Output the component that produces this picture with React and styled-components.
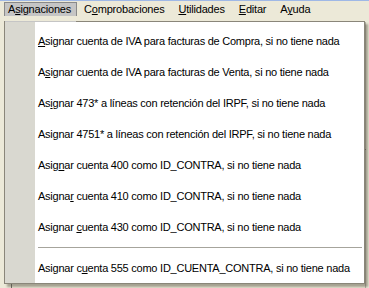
import React from "react";
import styled, { createGlobalStyle } from "styled-components";

const Global = createGlobalStyle`
  html, body { margin: 0; padding: 0; }
  body { font-family: "Liberation Sans", Arial, sans-serif; font-size: 11px; color: #000; }
`;

const Window = styled.div`
  position: relative;
  width: 369px;
  height: 288px;
  overflow: hidden;
  background: #ece9d8;
  display: flex;
  flex-direction: column;
`;

const TitleEdge = styled.div`
  height: 1px;
  background: #9fb8e6;
`;

const MenuBar = styled.div`
  display: flex;
  align-items: stretch;
  height: 20px;
  padding: 1px 0 0 4px;
  box-sizing: border-box;
  letter-spacing: -0.2px;
`;

const TopItem = styled.div`
  display: flex;
  align-items: center;
  padding-left: ${(p) => (p.$open ? "3px" : "6px")};
  padding-right: ${(p) => (p.$open ? "5px" : "6px")};
  box-sizing: border-box;
  white-space: nowrap;
  border: 1px solid ${(p) => (p.$open ? "#8a8a8a" : "transparent")};
  border-bottom: none;
  background: ${(p) => (p.$open ? "#c5c5c5" : "transparent")};
`;

const Content = styled.div`
  flex: 1;
  display: flex;
  padding: 6px 0 0 11px;
`;

const Grid = styled.div`
  flex: 1;
  border-left: 1px solid #6f6d66;
  background: #ece9d8;
  display: flex;
  flex-direction: column;
`;

const GridRow = styled.div`
  height: ${(p) => p.$h}px;
  background: ${(p) => p.$bg};
  border-bottom: ${(p) => (p.$line ? "1px solid #303030" : "none")};
  border-right: 1px solid #b5b2a6;
  margin-right: 3px;
`;

const Dropdown = styled.div`
  position: absolute;
  left: 4px;
  top: 21px;
  width: 361px;
  box-sizing: border-box;
  background: #fff;
  border: 1px solid #8a867a;
  box-shadow: 3px 3px 2px rgba(80, 76, 60, 0.45);
  display: flex;
  flex-direction: column;
  padding: 3px 0 0 0;
  letter-spacing: -0.24px;
`;

const TopGap = styled.div`
  position: absolute;
  left: 0;
  top: -1px;
  width: 71px;
  height: 1px;
  background: #c5c5c5;
`;

const Strip = styled.div`
  position: absolute;
  left: 0;
  top: 0;
  bottom: 0;
  width: 30px;
  background: #d9d8d0;
`;

const Item = styled.div`
  position: relative;
  height: 31px;
  display: flex;
  align-items: center;
  padding-left: 33px;
  white-space: nowrap;
`;

const Separator = styled.div`
  position: relative;
  height: 10px;
  display: flex;
  align-items: center;
  padding-left: 33px;
  padding-right: 2px;
  &::after {
    content: "";
    flex: 1;
    height: 1px;
    background: #a6a49c;
  }
`;

const Text = styled.span`
  white-space: pre;
`;

const Key = styled.span`
  text-decoration: underline;
`;

function Label({ text, k }) {
  return (
    <Text>
      {text.slice(0, k)}
      <Key>{text[k]}</Key>
      {text.slice(k + 1)}
    </Text>
  );
}

const topItems = [
  { t: "Asignaciones", k: 1, open: true },
  { t: "Comprobaciones", k: 1 },
  { t: "Utilidades", k: 0 },
  { t: "Editar", k: 0 },
  { t: "Ayuda", k: 1 },
];

const items = [
  { t: "Asignar cuenta de IVA para facturas de Compra, si no tiene nada", k: 0 },
  { t: "Asignar cuenta de IVA para facturas de Venta, si no tiene nada", k: 1 },
  { t: "Asignar 473* a líneas con retención del IRPF, si no tiene nada", k: 2 },
  { t: "Asignar 4751* a líneas con retención del IRPF, si no tiene nada", k: 3 },
  { t: "Asignar cuenta 400 como ID_CONTRA, si no tiene nada", k: 4 },
  { t: "Asignar cuenta 410 como ID_CONTRA, si no tiene nada", k: 6 },
  { t: "Asignar cuenta 430 como ID_CONTRA, si no tiene nada", k: 8 },
];

const last = { t: "Asignar cuenta 555 como ID_CUENTA_CONTRA, si no tiene nada", k: 9 };

export default function App() {
  return (
    <>
      <Global />
      <Window>
        <TitleEdge />
        <MenuBar>
          {topItems.map((m) => (
            <TopItem key={m.t} $open={m.open}>
              <Label text={m.t} k={m.k} />
            </TopItem>
          ))}
        </MenuBar>
        <Content>
          <Grid>
            <GridRow $h={127} $bg="#e6e4dc" $line />
            <GridRow $h={18} $bg="#d9a3a6" />
            <GridRow $h={120} $bg="#ece9d8" />
          </Grid>
        </Content>
        <Dropdown>
          <TopGap />
          <Strip />
          {items.map((it) => (
            <Item key={it.t}>
              <Label text={it.t} k={it.k} />
            </Item>
          ))}
          <Separator />
          <Item>
            <Label text={last.t} k={last.k} />
          </Item>
        </Dropdown>
      </Window>
    </>
  );
}
